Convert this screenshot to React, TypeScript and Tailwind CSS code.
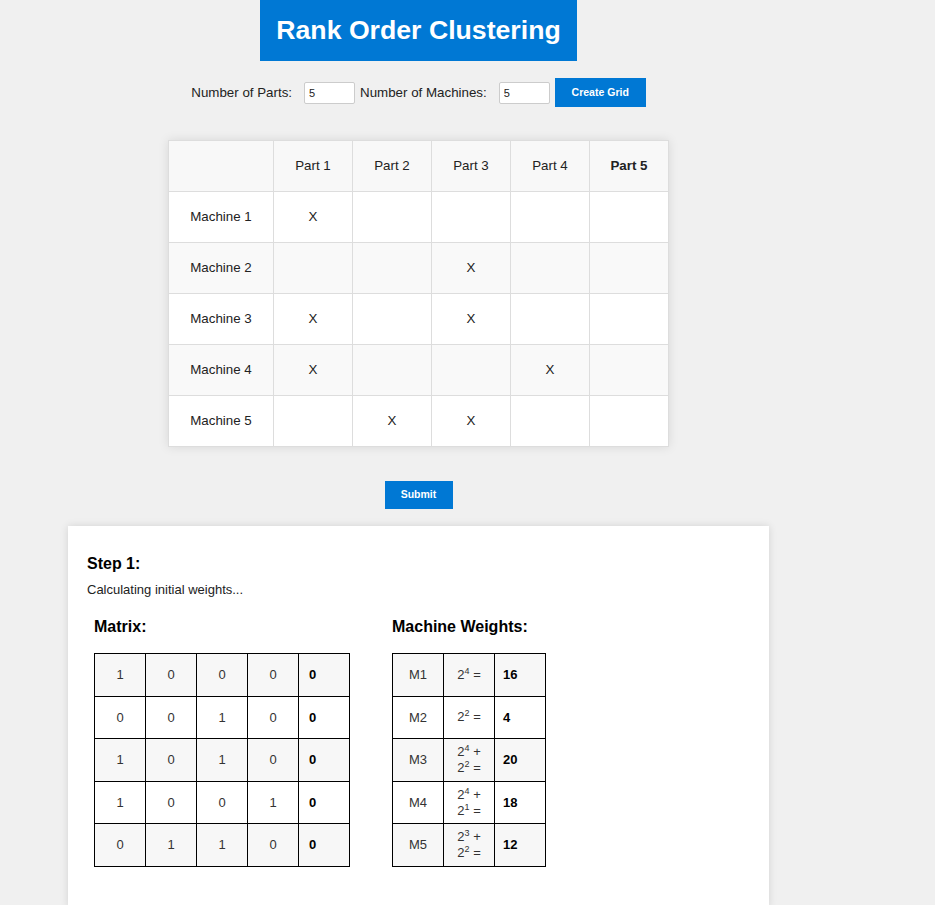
import React from 'react';

const parts = ['Part 1', 'Part 2', 'Part 3', 'Part 4', 'Part 5'];

const grid = [
  [1, 0, 0, 0, 0],
  [0, 0, 1, 0, 0],
  [1, 0, 1, 0, 0],
  [1, 0, 0, 1, 0],
  [0, 1, 1, 0, 0],
];

const weights: { m: string; terms: [number, string][]; total: number }[] = [
  { m: 'M1', terms: [[2, '4']], total: 16 },
  { m: 'M2', terms: [[2, '2']], total: 4 },
  { m: 'M3', terms: [[2, '4'], [2, '2']], total: 20 },
  { m: 'M4', terms: [[2, '4'], [2, '1']], total: 18 },
  { m: 'M5', terms: [[2, '3'], [2, '2']], total: 12 },
];

export default function App() {
  return (
    <div className="min-h-screen bg-[#f0f0f0] font-['Liberation_Sans',Arial,sans-serif] text-[#222]">
      <div className="w-[837px] flex flex-col items-center">
        <h1 className="h-[61px] px-[16px] flex items-center bg-[#0078d4] text-white text-[26.67px] font-bold leading-none">
          Rank Order Clustering
        </h1>

        <div className="mt-[17px] h-[29px] flex items-center text-[13.33px]">
          <label>Number of Parts:</label>
          <input
            defaultValue="5"
            className="ml-[12px] w-[51px] h-[22px] px-[4px] text-[11px] bg-white border border-[#ccc] rounded-[2px] outline-none"
          />
          <label className="ml-[5px]">Number of Machines:</label>
          <input
            defaultValue="5"
            className="ml-[12px] w-[51px] h-[22px] px-[4px] text-[11px] bg-white border border-[#ccc] rounded-[2px] outline-none"
          />
          <button className="ml-[5px] w-[91px] h-[29px] bg-[#0078d4] text-white text-[10.5px] font-bold">
            Create Grid
          </button>
        </div>

        {/* input grid */}
        <table className="mt-[33px] border-collapse bg-white shadow-[0_0_10px_rgba(0,0,0,0.1)] text-[13.33px] text-[#222]">
          <thead>
            <tr className="h-[51px] bg-[#f8f8f8]">
              <th className="w-[105px] border border-[#ddd] font-normal"></th>
              {parts.map((p, i) => (
                <th key={p} className={`w-[79px] border border-[#ddd] ${i === 4 ? 'font-bold' : 'font-normal'}`}>
                  {p}
                </th>
              ))}
            </tr>
          </thead>
          <tbody>
            {grid.map((row, r) => (
              <tr key={r} className={`h-[51px] ${r % 2 === 1 ? 'bg-[#f9f9f9]' : 'bg-white'}`}>
                <td className="border border-[#ddd] text-center">Machine {r + 1}</td>
                {row.map((v, c) => (
                  <td key={c} className="border border-[#ddd] text-center">
                    {v ? 'X' : ''}
                  </td>
                ))}
              </tr>
            ))}
          </tbody>
        </table>

        <button className="mt-[34px] w-[68px] h-[28px] bg-[#0078d4] text-white text-[10.5px] font-bold">
          Submit
        </button>

        <div className="mt-[17px] w-[701px] bg-white shadow-[0_0_8px_rgba(0,0,0,0.12)] pl-[19px] pt-[29px] pb-[40px]">
          <h3 className="text-[16px] font-bold leading-[18px] text-black">Step 1:</h3>
          <p className="mt-[9px] text-[13px] leading-[16px]">Calculating initial weights...</p>

          <div className="mt-[20px] pl-[7px] flex gap-[42px]">
            <div>
              <h4 className="text-[16px] font-bold leading-[18px] text-black">Matrix:</h4>
              <table className="mt-[17px] border-collapse text-[13px] text-[#333]">
                <tbody>
                  {grid.map((row, r) => (
                    <tr key={r} className={`h-[42.6px] ${r % 2 === 0 ? 'bg-[#f7f7f7]' : 'bg-white'}`}>
                      {row.map((v, c) => (
                        <td
                          key={c}
                          className={`w-[51px] border border-black ${
                            c === 4 ? 'text-left pl-[10px] font-bold text-black' : 'text-center'
                          }`}
                        >
                          {v}
                        </td>
                      ))}
                    </tr>
                  ))}
                </tbody>
              </table>
            </div>

            <div>
              <h4 className="text-[16px] font-bold leading-[18px] text-black">Machine Weights:</h4>
              <table className="mt-[17px] border-collapse text-[13px] text-[#333]">
                <tbody>
                  {weights.map((w, r) => (
                    <tr key={w.m} className={`h-[42.6px] ${r % 2 === 0 ? 'bg-[#f7f7f7]' : 'bg-white'}`}>
                      <td className="w-[51px] border border-black text-center">{w.m}</td>
                      <td className="w-[51px] border border-black text-center px-[8px] leading-[16px]">
                        {w.terms.map(([b, e], i) => (
                          <span key={i}>
                            {b}
                            <span className="relative top-[-5px] text-[9px] leading-none">{e}</span>
                            {i < w.terms.length - 1 ? ' + ' : ' ='}
                          </span>
                        ))}
                      </td>
                      <td className="w-[51px] border border-black text-left pl-[8px] font-bold text-black">
                        {w.total}
                      </td>
                    </tr>
                  ))}
                </tbody>
              </table>
            </div>
          </div>
        </div>
      </div>
    </div>
  );
}
